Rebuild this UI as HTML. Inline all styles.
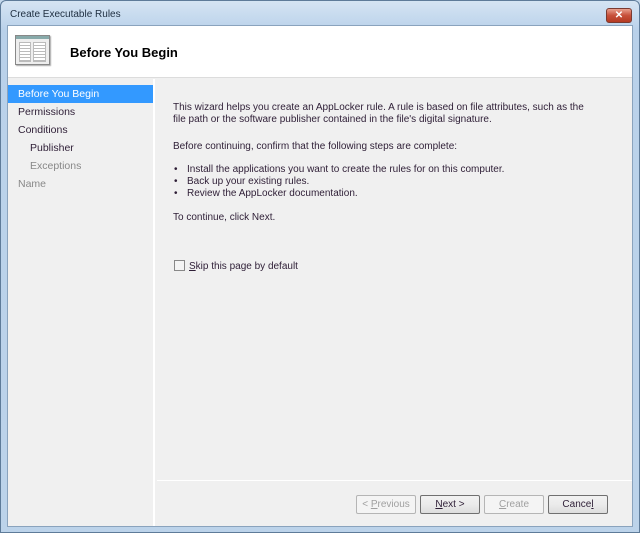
<!DOCTYPE html>
<html><head><style>
*{margin:0;padding:0;box-sizing:border-box}
body{width:640px;height:533px;overflow:hidden;background:#c4d8ec;font-family:"Liberation Sans",sans-serif;font-size:10px;color:#2e1e36;position:relative}
.frame{position:absolute;left:0;top:0;width:640px;height:533px;background:linear-gradient(#d5e4f3,#b9d1ea 30px,#bcd3ea);border:1px solid #5e7b99;border-radius:6px 6px 0 0}
.title{position:absolute;left:10px;top:9px;font-size:10px;color:#1e2e40}
.close{position:absolute;left:606px;top:8px;width:26px;height:15px;border:1px solid #7a3a30;border-radius:3px;background:linear-gradient(#e9a08e,#c7503a 50%,#b43a22);color:#fff;font-size:10px;font-weight:bold;text-align:center;line-height:13px}
.client{position:absolute;left:7px;top:25px;width:626px;height:502px;background:#f0f0f0;border:1px solid #8aa3bd}
.header{position:absolute;left:0;top:0;width:624px;height:52px;background:#fff;border-bottom:1px solid #dcdcdc}
.htitle{position:absolute;left:62px;top:19px;font-size:13px;font-weight:bold;color:#000}
.icon{position:absolute;left:7px;top:9px;width:35px;height:30px;border:1px solid #888;background:#eee;box-shadow:1px 1px 1px #aaa}
.icon:before{content:"";position:absolute;left:0;top:0;width:33px;height:3px;background:#8aa}
.icon i{position:absolute;top:6px;height:20px;border:1px solid #bbb;background:repeating-linear-gradient(#fff 0 2px,#bbb 2px 3px)}
.nav{position:absolute;left:0;top:53px;width:147px;height:447px;background:#f0f0f0;border-right:2px solid #fff}
.nav div{height:18px;line-height:18px;padding-left:10px;font-size:10.5px}
.nav .sel{background:#3399ff;color:#fff;margin-top:6px}
.nav .sub{padding-left:22px}
.nav .dis{color:#888}
.content{position:absolute;left:165px;top:76px;line-height:12px;white-space:nowrap}
.content li{list-style:none;padding-left:14px;position:relative}
.content li:before{content:"•";position:absolute;left:1px}
.chk{position:absolute;left:166px;top:234px}
.chk span{display:inline-block;width:11px;height:11px;border:1px solid #888;background:#f4f4f4;vertical-align:-2px;margin-right:4px}
.sep{position:absolute;left:149px;top:454px;width:475px;border-top:1px solid #fff}
.btn{position:absolute;top:469px;width:60px;height:19px;border:1px solid #707070;border-radius:2px;background:linear-gradient(#f2f2f2,#ebebeb 50%,#dddddd);text-align:center;line-height:17px;font-size:10px}
.btn.d{border-color:#b5b5b5;color:#a0a0a0;background:#f4f4f4}
</style></head><body>
<div class="frame"></div>
<div class="title">Create Executable Rules</div>
<div class="close">✕</div>
<div class="client">
 <div class="header">
  <div class="icon"><i style="left:3px;width:12px"></i><i style="left:17px;width:13px"></i></div>
  <div class="htitle">Before You Begin</div>
 </div>
 <div class="nav">
  <div class="sel">Before You Begin</div>
  <div>Permissions</div>
  <div>Conditions</div>
  <div class="sub">Publisher</div>
  <div class="sub dis">Exceptions</div>
  <div class="dis">Name</div>
 </div>
 <div class="content">
  <p style="margin-bottom:15px">This wizard helps you create an AppLocker rule. A rule is based on file attributes, such as the<br>file path or the software publisher contained in the file's digital signature.</p>
  <p style="margin-bottom:11px">Before continuing, confirm that the following steps are complete:</p>
  <ul style="margin-bottom:12px"><li>Install the applications you want to create the rules for on this computer.</li><li>Back up your existing rules.</li><li>Review the AppLocker documentation.</li></ul>
  <p>To continue, click Next.</p>
 </div>
 <div class="chk"><span></span><u>S</u>kip this page by default</div>
 <div class="sep"></div>
 <div class="btn d" style="left:348px">&lt; <u>P</u>revious</div>
 <div class="btn" style="left:412px"><u>N</u>ext &gt;</div>
 <div class="btn d" style="left:476px"><u>C</u>reate</div>
 <div class="btn" style="left:540px">Cance<u>l</u></div>
</div>
</body></html>
